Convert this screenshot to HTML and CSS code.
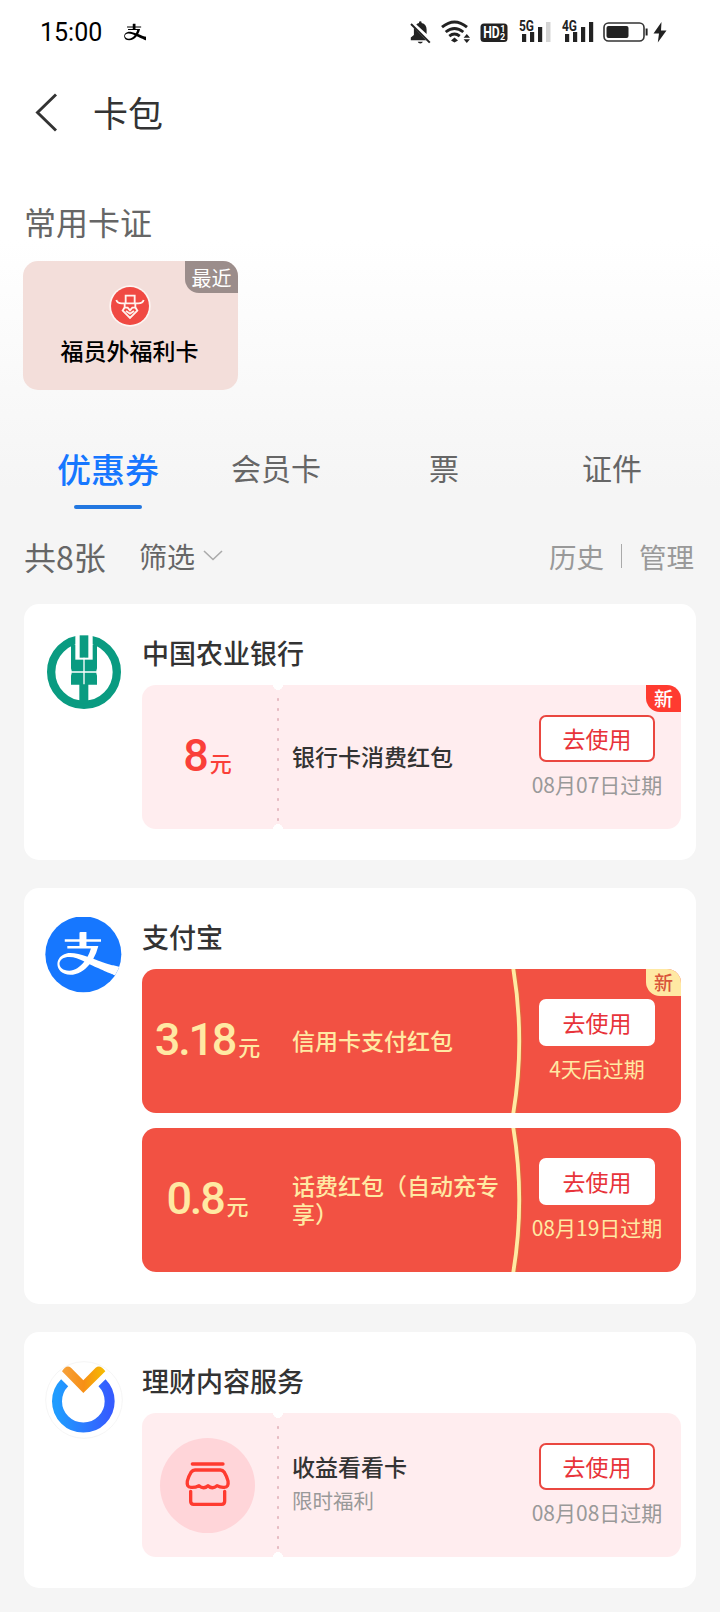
FILE: index.html
```html
<!DOCTYPE html>
<html lang="zh-CN">
<head>
<meta charset="UTF-8">
<title>卡包</title>
<link rel="stylesheet" href="styles.css">
</head>
<body>
<svg class="defs" width="0" height="0" aria-hidden="true">
  <symbol id="zhi" viewBox="1.7 3 22.3 17.2">
    <path fill-rule="evenodd" d="M28 17.3L23.9 16.29C23.9 16.29 23.12 16.23 19.695 15.07c-.952-.322-2.23-.813-3.654-1.333a19.453 19.453 0 0 0 1.986-5.06H13.338V6.973h5.744v-.951H13.338V3.182H10.991c-.411 0-.411.409-.411.409V6.022H4.77v.953h5.81v1.702H5.781v.952h9.316a16.8 16.8 0 0 1-1.341 3.302c-3.019-1.004-6.241-1.819-8.266-1.317-1.293.322-2.127.895-2.617 1.497-2.249 2.759-.638 6.949 4.112 6.949 2.807 0 5.511-1.579 7.607-4.181 3.125 1.517 9.315 4.119 9.315 4.119L28 21.7zM5.885 13.038c-.596.06-1.71.325-2.321.869-1.83 1.608-.735 4.55 2.968 4.55 2.151 0 4.301-1.388 5.99-3.61-2.403-1.182-4.438-2.028-6.637-1.809"/>
  </symbol>
</svg>

<header class="status">
  <span class="clock">15:00</span>
  <svg class="status-zhi" width="22" height="18"><use href="#zhi" width="22" height="18"/></svg>
  <div class="status-icons">
    <svg class="i-bell" width="21" height="23" viewBox="0 0 21 23"><path d="M6.300 3.500Q7.500 2.200 9 1.900V1.400Q9 .3 10.300.3T11.600 1.400V1.900Q16.600 3 16.600 8.500V13zM3.900 6.800L16 19.300H.8V16.600L3.900 14zM7.700 20.800H12.900Q12.300 22.600 10.300 22.600T7.700 20.800" fill="#222"/><path d="M1 3L19.800 21.600" stroke="#222" stroke-width="2"/></svg>
    <svg class="i-wifi" width="30" height="23" viewBox="0 0 30 23"><g fill="none" stroke="#222" stroke-width="2.900"><path d="M1 7.200Q13.500-3.200 26 7.200M4.700 12Q13.500 4.800 22.300 12M8.300 16.100Q13.500 12 18.700 16.100"/></g><path d="M13.500 17.500L17 20.500 13.500 22.500 10 20.500zM25.800 14L29 17.800H22.600zM25.800 23L29 19.200H22.600z" fill="#222"/></svg>
    <svg class="i-hd" width="28" height="20" viewBox="0 0 28 20"><rect x=".5" y=".5" width="27" height="18.500" rx="3.500" fill="#222"/><g fill="#fff" class="svg-bold"><text x="3.200" y="15.200" font-size="16" textLength="16.500" lengthAdjust="spacingAndGlyphs">HD</text><text x="20.300" y="9" font-size="9">1</text><text x="20" y="17.300" font-size="9">2</text></g></svg>
    <svg class="i-sig" width="32" height="23" viewBox="0 0 32 23"><text class="svg-bold" x="0" y="10.800" font-size="14.500" textLength="15" lengthAdjust="spacingAndGlyphs" fill="#222">5G</text><path d="M3 14h4.200v8H3zM11 12h4.200v10H11zM19 7h4.200v15H19z" fill="#222"/><path d="M27 2h4.500v20H27z" fill="#d4d4d4"/></svg>
    <svg class="i-sig" width="32" height="23" viewBox="0 0 32 23"><text class="svg-bold" x="0" y="10.800" font-size="14.500" textLength="15" lengthAdjust="spacingAndGlyphs" fill="#222">4G</text><path d="M3 14h4.200v8H3zM11 12h4.200v10H11zM19 7h4.200v15H19zM27 2h4.200v20H27z" fill="#222"/></svg>
    <svg class="i-bat" width="45" height="20" viewBox="0 0 45 20"><rect x="1" y="1" width="40" height="18" rx="4.500" fill="none" stroke="#333" stroke-width="1.600"/><rect x="3.500" y="4" width="22" height="12" rx="2" fill="#222"/><path d="M43.600 6.500v7" stroke="#222" stroke-width="2"/></svg>
    <svg class="i-bolt" width="14" height="21" viewBox="0 0 14 21"><path d="M8.500 0L.5 11.500H6L4.800 20.500 13.500 8.500H8z" fill="#222"/></svg>
  </div>
</header>

<nav class="titlebar">
  <svg class="back" width="23" height="39" viewBox="0 0 23 39"><path d="M21 1.500L2.500 19.500 21 37.500" fill="none" stroke="#333" stroke-width="2.900"/></svg>
  <h1>卡包</h1>
</nav>

<h2 class="section">常用卡证</h2>
<div class="pass">
  <span class="pass-tag">最近</span>
  <svg class="pass-logo" width="42" height="42" viewBox="0 0 126 126"><circle cx="63" cy="63" r="62" fill="#fdf6f3"/><circle cx="63" cy="63" r="57" fill="#f04a43"/><g fill="none" stroke="#fff4ee" stroke-width="5.500"><path d="M22 45Q25 55 38 55H88Q101 55 104 45M50 55V32H77V55M47 55V67L41 77 63 99 85 77 79 67V55M47 68L56 68 63 76 70 68 79 68M51 78L63 86 75 78"/></g></svg>
  <span class="pass-name">福员外福利卡</span>
</div>

<div class="tabs">
  <span class="tab active">优惠券</span><span class="tab">会员卡</span><span class="tab">票</span><span class="tab">证件</span>
</div>

<div class="filter">
  <span class="count">共8张</span>
  <span class="pick">筛选</span>
  <svg class="chev" width="20" height="11" viewBox="0 0 20 11"><path d="M1 1L10 9.500 19 1" fill="none" stroke="#aaa" stroke-width="1.600"/></svg>
  <span class="muted history">历史</span><i class="bar"></i><span class="muted">管理</span>
</div>

<main class="list">
  <section class="card">
    <svg class="logo" width="78" height="78" viewBox="-6 -6 234 234"><circle cx="111" cy="111" r="98.500" fill="none" stroke="#0a9b81" stroke-width="25"/><path d="M72 30H150V100L147 111 150 122V149H124V205H97V149H72V122L75 111 72 100z" fill="#0a9b81"/><path d="M85-6H137V74H85z" fill="#fff"/><path d="M98 1H124V68H98z" fill="#0a9b81"/><path d="M74 111H148M111 68V148" stroke="#fff" stroke-width="4"/></svg>
    <div class="body">
      <h3>中国农业银行</h3>
      <article class="coupon pink">
        <div class="amount"><b>8</b><small>元</small></div>
        <div class="perf"></div>
        <div class="desc"><p>银行卡消费红包</p></div>
        <div class="act"><span class="btn">去使用</span><span class="date">08月07日过期</span></div>
        <span class="new">新</span>
      </article>
    </div>
  </section>

  <section class="card multi">
    <svg class="logo" width="78" height="78" viewBox="-1 2 234 234"><clipPath id="c"><circle cx="114" cy="114" r="114"/></clipPath><circle cx="114" cy="114" r="114" fill="#1677ff"/><g clip-path="url(#c)"><svg x="34.900" y="45.800" width="169.500" height="130.700" viewBox="1.700 3 22.300 17.200" overflow="visible"><use href="#zhi" x="1.700" y="3" width="22.300" height="17.200" fill="#fff" class="spill"/></svg></g></svg>
    <div class="body">
      <h3>支付宝</h3>
      <article class="coupon red">
        <div class="amount"><b>3.18</b><small>元</small></div>
        <div class="perf"></div>
        <div class="desc"><p>信用卡支付红包</p></div>
        <div class="act"><span class="btn">去使用</span><span class="date">4天后过期</span></div>
        <svg class="arc" width="16" height="144" viewBox="0 0 16 144"><path d="M4.500-2Q17 72 4.500 146" fill="none" stroke="#dc6b3c" stroke-width="5"/><path d="M4-2Q16.500 72 4 146" fill="none" stroke="#ffe9a3" stroke-width="3.800"/></svg>
        <span class="new">新</span>
      </article>
      <article class="coupon red">
        <div class="amount"><b>0.8</b><small>元</small></div>
        <div class="perf"></div>
        <div class="desc"><p>话费红包（自动充专享）</p></div>
        <div class="act"><span class="btn">去使用</span><span class="date">08月19日过期</span></div>
        <svg class="arc" width="16" height="144" viewBox="0 0 16 144"><path d="M4.500-2Q17 72 4.500 146" fill="none" stroke="#dc6b3c" stroke-width="5"/><path d="M4-2Q16.500 72 4 146" fill="none" stroke="#ffe9a3" stroke-width="3.800"/></svg>
      </article>
    </div>
  </section>

  <section class="card">
    <svg class="logo" width="78" height="78" viewBox="2 2 234 234"><defs><linearGradient id="b"><stop offset="0" stop-color="#209cff"/><stop offset="1" stop-color="#355cff"/></linearGradient><linearGradient id="o"><stop offset="0" stop-color="#f6a23c"/><stop offset=".5" stop-color="#f78f16"/><stop offset="1" stop-color="#f5bd00"/></linearGradient></defs><circle cx="119" cy="119" r="115" fill="#fff" stroke="#f0f0f0" stroke-width="2"/><path d="M61 67A79 79 0 1 0 173 67" fill="none" stroke="url(#b)" stroke-width="30"/><path d="M63 28L118 80 171 28" fill="none" stroke="#fff" stroke-width="42"/><path d="M53 33Q66 11 80 22L117 60 154 22Q168 11 183 33L117 98z" fill="url(#o)"/></svg>
    <div class="body">
      <h3>理财内容服务</h3>
      <article class="coupon pink">
        <div class="amount"><span class="disc"><svg width="46" height="46" viewBox="0 0 138 138"><g fill="none" stroke="#ff3b30" stroke-width="10" stroke-linecap="round" stroke-linejoin="round"><path d="M22 6H114M30 24H106Q113 24 118 31Q126 44 129 57Q132 76 118 76Q106 77 96 71Q82 83 69 71Q56 83 42 71Q30 77 18 76Q4 76 7 57Q10 44 18 31Q23 24 30 24zM17 88V118Q17 127 26 127H110Q119 127 119 118V88"/></g></svg></span></div>
        <div class="perf"></div>
        <div class="desc"><p>收益看看卡</p><em>限时福利</em></div>
        <div class="act"><span class="btn">去使用</span><span class="date">08月08日过期</span></div>
      </article>
    </div>
  </section>
</main>
</body>
</html>
```

FILE: styles.css
```css
* { box-sizing: border-box; margin: 0; padding: 0; }

body {
  width: 720px;
  height: 1612px;
  overflow: hidden;
  font-family: "Noto Sans CJK SC", sans-serif;
  font-weight: 400;
  color: #333;
  background: #f5f5f5 linear-gradient(#fff 0, #fff 240px, #f5f5f5 490px);
}

.defs { position: absolute; }
.svg-bold { font-family: Roboto, sans-serif; font-weight: 700; }
.spill { overflow: visible; }
#zhi { overflow: visible; }

.status { display: flex; align-items: flex-start; height: 64px; padding: 20px 53px 0 40px; }
.clock { width: 84px; font: 400 25px/26px Roboto, sans-serif; color: #000; }
.status-zhi { margin-top: 3px; overflow: hidden; }
.status-icons { display: flex; align-items: flex-start; margin-left: auto; }
.i-bell { margin-top: 1px; }
.i-wifi { margin-left: 10px; }
.i-hd { margin: 3px 0 0 9px; }
.i-sig { margin-left: 11px; overflow: visible; }
.i-bat { margin: 2px 0 0 9px; }
.i-bolt { margin: 2px 0 0 5px; }

.titlebar { display: flex; align-items: center; height: 96px; padding: 0 0 0 35px; }
.titlebar h1 { margin: 0 0 1px 35px; font-size: 35px; line-height: 40px; font-weight: 400; }

.section { padding: 41px 0 0 24px; font-size: 32px; line-height: 40px; font-weight: 400; color: #666; }

.pass {
  position: relative;
  display: flex;
  flex-direction: column;
  align-items: center;
  width: 215px;
  height: 129px;
  margin: 20px 0 0 23px;
  padding: 24px 2px 0 0;
  border-radius: 15px;
  background: #f3deda;
  overflow: hidden;
}
.pass-tag {
  position: absolute;
  top: 0;
  right: 0;
  width: 53px;
  height: 32px;
  border-radius: 0 0 0 14px;
  background: #9b8d8b;
  color: #fff;
  font-size: 20px;
  line-height: 33px;
  text-align: center;
}
.pass-name { margin-top: 7px; font-size: 23px; line-height: 32px; font-weight: 500; color: #000; }

.tabs { display: flex; height: 120px; padding: 50px 24px 0; }
.tab { flex: 1; height: 69px; line-height: 55px; text-align: center; font-size: 30px; color: #666; }
.tab.active { display: flex; flex-direction: column; align-items: center; line-height: 57px; font-size: 34px; font-weight: 500; color: #1677ff; }
.tab.active::after { content: ""; width: 68px; height: 4px; margin-top: 8px; border-radius: 2px; background: #2277e0; }

.filter { display: flex; align-items: center; height: 94px; padding: 0 26px 3px 24px; line-height: 40px; }
.count { width: 115px; font-size: 32px; color: #666; }
.pick { font-size: 28px; color: #666; }
.chev { margin-left: 8px; }
.muted { font-size: 27.5px; color: #999; }
.history { margin-left: auto; }
.bar { width: 1px; height: 24px; margin: 0 17px; background: #aaa; }

.list { display: flex; flex-direction: column; gap: 28px; padding: 0 24px; }
.card { display: flex; gap: 19px; padding: 29px 15px 31px 21px; border-radius: 15px; background: #fff; }
.card.multi { padding-bottom: 32px; }
.logo { flex: none; }
.body { flex: 1; display: flex; flex-direction: column; gap: 15px; }
.body h3 { height: 37px; font-size: 27px; line-height: 39px; font-weight: 500; }

.coupon { position: relative; display: flex; height: 144px; border-radius: 14px; overflow: hidden; }
.pink { background: radial-gradient(circle 5px at 50% 0, #fff 98%, transparent) 130px 0 / 12px 144px no-repeat, radial-gradient(circle 5px at 50% 100%, #fff 98%, transparent) 130px 0 / 12px 144px no-repeat, #ffedef; }
.red { background: #f25143; color: #ffe9a3; }

.amount { display: flex; align-items: center; justify-content: center; width: 131px; line-height: 44px; }
.amount b { margin-bottom: 2px; font: 500 45px/44px Roboto, sans-serif; letter-spacing: -2.2px; }
.amount small { margin: 9px 0 0 3px; font-size: 22px; line-height: 30px; font-weight: 500; }
.pink .amount { color: #fa3f39; }
.disc { display: flex; align-items: center; justify-content: center; width: 95px; height: 95px; border-radius: 50%; background: #ffd5d9; }

.perf { width: 8px; margin: 13px 0 8px 1px; }
.pink .perf { background: radial-gradient(circle 1.5px at 4px 1.5px, #e6bcc2 70%, transparent) 0 0 / 8px 10px; }

.desc { width: 226px; padding: 0 5px 3px 10px; align-self: center; }
.desc p { font-size: 23px; line-height: 28px; font-weight: 500; }
.desc em { display: block; margin: 7px 0 3px; font-size: 20.5px; line-height: 26px; font-style: normal; color: #999; }

.act { display: flex; flex-direction: column; align-items: center; width: 168px; margin-left: auto; padding-top: 30px; }
.btn { width: 116px; height: 47px; border-radius: 7px; background: #fff; color: #e8333a; font-size: 23px; line-height: 47px; text-align: center; }
.pink .btn { border: 2px solid #ea4740; line-height: 43px; }
.date { margin-top: 8px; font-size: 21px; line-height: 28px; }
.pink .date { color: #999; }

.new {
  position: absolute;
  top: 0;
  right: 0;
  width: 35px;
  height: 27px;
  border-radius: 0 0 0 14px;
  background: #ff3b30;
  color: #fff;
  font-size: 19px;
  line-height: 26px;
  font-weight: 500;
  text-align: center;
}
.red .new { background: #ffe9a3; color: #d9543a; }
.arc { position: absolute; top: 0; right: 156px; }
```
